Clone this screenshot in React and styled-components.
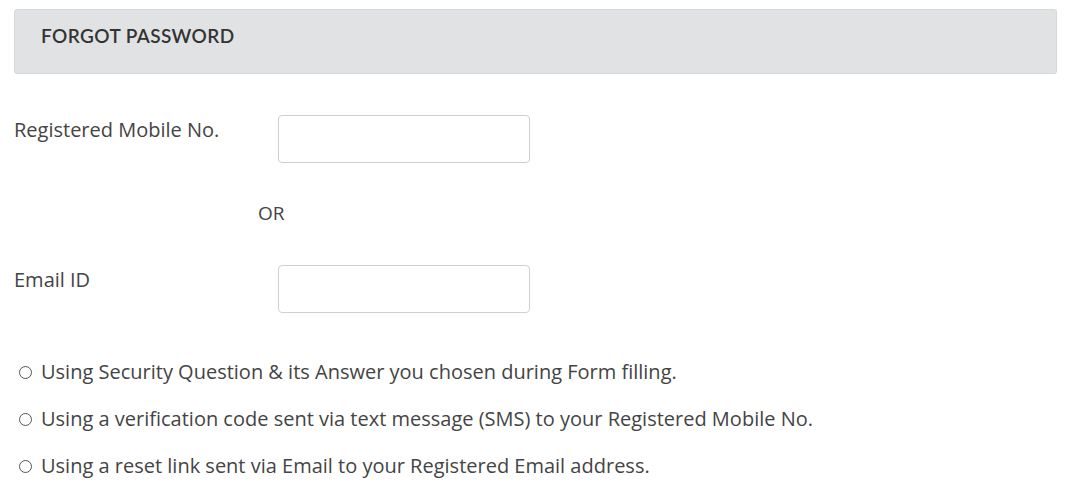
import React from 'react'
import styled, { createGlobalStyle } from 'styled-components'

const GlobalStyle = createGlobalStyle`
  body {
    margin: 0;
    background: #fff;
    font-family: "Open Sans", "Liberation Sans", sans-serif;
    color: #444;
  }
`

const Page = styled.div`
  padding: 9px 9px 0 14px;
`

const Header = styled.div`
  height: 65px;
  box-sizing: border-box;
  background: #e1e2e4;
  border: 1px solid #d6d7d9;
  border-radius: 3px;
  display: flex;
  align-items: center;
  padding: 0 0 13px 26px;
`

const Title = styled.h2`
  margin: 0;
  font-family: "Lato", "Open Sans", sans-serif;
  font-weight: 600;
  font-size: 19px;
  letter-spacing: 0.4px;
  color: #333;
`

const Form = styled.div`
  padding-top: 41px;
`

const Row = styled.div`
  display: grid;
  grid-template-columns: 264px 252px;
  align-items: start;
`

const Label = styled.label`
  font-size: 20px;
  line-height: 26px;
  padding-top: 2px;
`

const Input = styled.input`
  height: 48px;
  box-sizing: border-box;
  border: 1px solid #d0d0d0;
  border-radius: 4px;
  font-size: 16px;
  padding: 0 10px;
  outline: none;
`

const Or = styled.div`
  font-size: 19px;
  line-height: 26px;
  padding: 37px 0 39px 244px;
`

const Options = styled.div`
  display: flex;
  flex-direction: column;
  gap: 21px;
  padding: 46px 0 0 5px;
`

const Option = styled.label`
  display: flex;
  align-items: center;
  gap: 9px;
  font-size: 20px;
  line-height: 26px;
`

const Circle = styled.span`
  width: 11px;
  height: 11px;
  border: 1px solid #555;
  border-radius: 50%;
  flex-shrink: 0;
`

export default function App() {
  return (
    <>
      <GlobalStyle />
      <Page>
        <Header>
          <Title>FORGOT PASSWORD</Title>
        </Header>
        <Form>
          <Row>
            <Label>Registered Mobile No.</Label>
            <Input type="text" />
          </Row>
          <Or>OR</Or>
          <Row>
            <Label>Email ID</Label>
            <Input type="text" />
          </Row>
          <Options>
            <Option><Circle />Using Security Question &amp; its Answer you chosen during Form filling.</Option>
            <Option><Circle />Using a verification code sent via text message (SMS) to your Registered Mobile No.</Option>
            <Option><Circle />Using a reset link sent via Email to your Registered Email address.</Option>
          </Options>
        </Form>
      </Page>
    </>
  )
}
